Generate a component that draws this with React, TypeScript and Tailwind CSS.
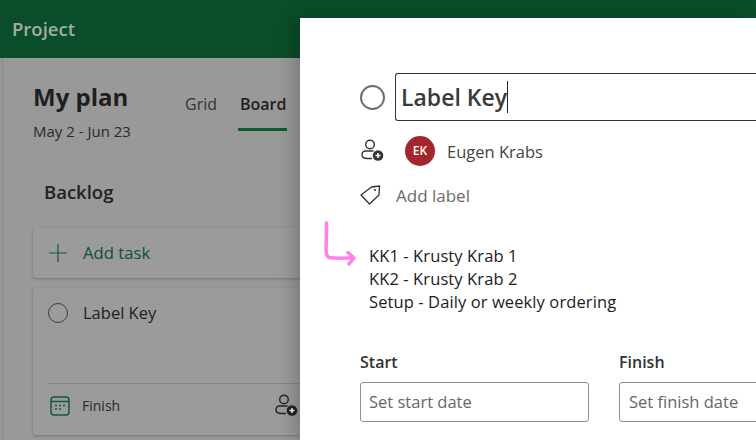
const FONT = "font-['Open_Sans','Noto_Sans',sans-serif]";

function PersonAdd({ className = "" }: { className?: string }) {
  return (
    <svg width="24" height="24" viewBox="0 0 24 24" fill="none" className={className}>
      <circle cx="10" cy="5.500" r="4.300" stroke="currentColor" strokeWidth="1.400" />
      <path d="M13.500 12H5.500a3.500 3.500 0 0 0-3.500 3.500c0 2.500 2.300 4 5 4h5" stroke="currentColor" strokeWidth="1.400" />
      <circle cx="18" cy="16.500" r="5.300" fill="currentColor" />
      <path d="M18 14v5M15.500 16.500h5" stroke="#fff" strokeWidth="1.500" />
    </svg>
  );
}

function Tag() {
  return (
    <svg width="24" height="24" viewBox="0 0 24 24" fill="none" className="text-[#333]">
      <path d="M1 11 11.500 3 19.500 2l-.5 9L9.500 20z" stroke="currentColor" strokeWidth="1.300" strokeLinejoin="round" />
      <circle cx="15" cy="6" r="1.100" fill="currentColor" />
    </svg>
  );
}

function CalendarIcon() {
  return (
    <svg width="20" height="20" viewBox="0 0 20 20" fill="none" className="text-[#15593a]">
      <rect x="1" y="1" width="18" height="18" rx="3" stroke="currentColor" strokeWidth="1.500" />
      <path d="M1 5.500h18" stroke="currentColor" strokeWidth="1.500" />
      <path d="M5 9.500h2M9 9.500h2M13 9.500h2M5 13h2M9 13h2" stroke="currentColor" strokeWidth="1.700" />
    </svg>
  );
}

function Board() {
  return (
    <div className="flex-1 border-l border-[#8c8c8c] ml-[2px] pl-[30px]">
      <div className="flex items-start pt-[23px] h-[102px]">
        <div className="w-[152px]">
          <div className="text-[24px] leading-[32px] font-bold text-[#1e1e1e]">My plan</div>
          <div className="text-[15px] leading-[20px] mt-[8px] text-[#2a2a2a]">May 2 - Jun 23</div>
        </div>
        <div className="text-[16px] leading-[22px] mt-[12px] text-[#333] w-[55px]">Grid</div>
        <div className="mt-[12px] flex flex-col">
          <div className="text-[16px] leading-[22px] font-semibold text-[#1e1e1e]">Board</div>
          <div className="h-[3px] w-[49px] -ml-[2px] bg-[#0e5a31] mt-[13px]" />
        </div>
      </div>
      <div className="text-[18.500px] leading-[24px] font-semibold text-[#222] pl-[11px] mt-[20px]">Backlog</div>
      <div className="mt-[24px] h-[50px] bg-[#9b9b9b] rounded-[3px] shadow-[0_1px_3px_rgba(0,0,0,0.25)] flex items-center pl-[15px] gap-[15px]">
        <svg width="20" height="20" viewBox="0 0 20 20" fill="none" className="text-[#0f5c34]">
          <path d="M10 1v18M1 10h18" stroke="currentColor" strokeWidth="1.200" />
        </svg>
        <span className="text-[16.700px] text-[#0f4f34]">Add task</span>
      </div>
      <div className="mt-[10px] h-[147px] bg-[#9b9b9b] rounded-[3px] shadow-[0_1px_3px_rgba(0,0,0,0.25)] pl-[15px] flex flex-col">
        <div className="flex items-start gap-[15px] pt-[15px]">
          <div className="w-[20px] h-[20px] rounded-full border border-[#3c3c3c]" />
          <span className="text-[16.500px] leading-[20px] text-[#222]">Label Key</span>
        </div>
        <div className="mt-[60px] border-t border-[#868686] flex items-center h-[44px]">
          <div className="ml-[2px]"><CalendarIcon /></div>
          <span className="text-[14px] text-[#2a2a2a] ml-[12px]">Finish</span>
          <PersonAdd className="ml-auto mr-[2px] text-[#222]" />
        </div>
      </div>
    </div>
  );
}

function Modal() {
  return (
    <div className="absolute left-[300px] top-[18px] right-0 bottom-0 bg-white pl-[60px] shadow-[-8px_0_14px_rgba(0,0,0,0.18)]">
      <div className="flex items-center gap-[10px] mt-[55px]">
        <div className="w-[25px] h-[25px] rounded-full border-2 border-[#6e6e6e] mt-[1px]" />
        <div className="flex-1 h-[48px] border border-[#333] border-r-0 rounded-l-[3px] flex items-center pl-[5px]">
          <span className="text-[23px] font-semibold text-[#3a3a3a]">Label Key</span>
          <span className="w-px h-[32px] bg-[#222]" />
        </div>
      </div>
      <div className="flex items-center mt-[14px] h-[32px]">
        <PersonAdd className="text-[#333] mt-[-1px]" />
        <div className="ml-[21px] w-[30px] h-[30px] rounded-full bg-[#a4262c] text-white text-[12px] font-semibold flex items-center justify-center">EK</div>
        <span className="ml-[12px] mt-[3px] text-[16.500px] text-[#444]">Eugen Krabs</span>
      </div>
      <div className="flex items-center mt-[15px] h-[28px]">
        <Tag />
        <span className="ml-[12px] text-[17px] text-[#6a6a6a]">Add label</span>
      </div>
      <div className="mt-[34px] ml-[9px] text-[16.500px] tracking-[0.1px] leading-[23px] text-[#1c1c1c]">
        <div>KK1 - Krusty Krab 1</div>
        <div>KK2 - Krusty Krab 2</div>
        <div>Setup - Daily or weekly ordering</div>
      </div>
      <div className="flex gap-[30px] mt-[38px]">
        <div className="w-[229px] shrink-0">
          <div className="text-[16px] leading-[22px] font-semibold text-[#333]">Start</div>
          <div className="mt-[9px] h-[40px] border border-[#8f8f8f] rounded-[3px] flex items-center pl-[8px] text-[16.500px] text-[#666]">Set start date</div>
        </div>
        <div className="w-[229px] shrink-0">
          <div className="text-[16px] leading-[22px] font-semibold text-[#333]">Finish</div>
          <div className="mt-[9px] h-[40px] border border-[#8f8f8f] rounded-[3px] flex items-center pl-[9px] text-[16.500px] text-[#666] whitespace-nowrap">Set finish date</div>
        </div>
      </div>
      <svg width="40" height="50" viewBox="0 0 40 50" fill="none" className="absolute left-[20px] top-[202px]">
        <path d="M6.500 3c.5 10-.8 20-.3 29 .2 3 1 5.500 4 5.800 7 .7 14 .3 23 .2M28 32.500l6 5.500-5 6" stroke="#ff80ee" strokeWidth="3.500" strokeLinecap="round" strokeLinejoin="round" />
      </svg>
    </div>
  );
}

export default function App() {
  return (
    <div className={`relative w-[756px] h-[440px] overflow-hidden bg-[#999] ${FONT}`}>
      <div className="h-[58px] bg-[#0a4d2a] flex items-center pl-[12px] text-[18.500px] font-semibold text-[#a3aca6]">Project</div>
      <div className="flex h-[382px] pr-[456px]">
        <Board />
      </div>
      <Modal />
    </div>
  );
}
